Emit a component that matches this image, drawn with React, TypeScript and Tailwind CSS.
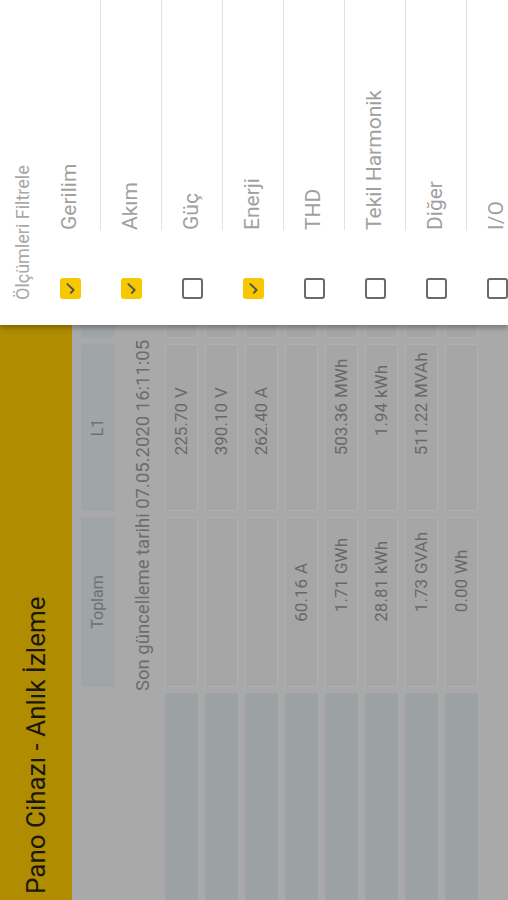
import { Fragment } from "react";

type Val = [string, string] | null;

const rows: { toplam: Val; l1: Val }[] = [
    { toplam: null, l1: ["225.70", "V"] },
    { toplam: null, l1: ["390.10", "V"] },
    { toplam: null, l1: ["262.40", "A"] },
    { toplam: ["60.16", "A"], l1: null },
    { toplam: ["1.71", "GWh"], l1: ["503.36", "MWh"] },
    { toplam: ["28.81", "kWh"], l1: ["1.94", "kWh"] },
    { toplam: ["1.73", "GVAh"], l1: ["511.22", "MVAh"] },
    { toplam: ["0.00", "Wh"], l1: null },
];

const filters = [
    { id: 1, label: "Gerilim", checked: true },
    { id: 2, label: "Akım", checked: true },
    { id: 3, label: "Güç", checked: false },
    { id: 4, label: "Enerji", checked: true },
    { id: 5, label: "THD", checked: false },
    { id: 6, label: "Tekil Harmonik", checked: false },
    { id: 7, label: "Diğer", checked: false },
    { id: 8, label: "I/O", checked: false },
];

function ValueCell({ value, width }: { value: Val; width: string }) {
    return (
        <div className={`${width} h-full rounded-[3px] bg-[#a6a6a6] border border-[#b0b0b0] flex items-center text-[17px] text-[#686868] whitespace-nowrap`}>
            {value && (
                <>
                    <span className="w-[107px] shrink-0 text-right">{value[0]}</span>
                    <span className="pl-[5px]">{value[1]}</span>
                </>
            )}
        </div>
    );
}

function Checkbox({ checked }: { checked: boolean }) {
    if (checked) {
        return (
            <div className="w-[21px] h-[21px] rounded-[3px] bg-[#f7c800] flex items-center justify-center">
                <svg width="15" height="15" viewBox="0 0 24 24" fill="none" stroke="#55554c" strokeWidth="3.2" strokeLinecap="round" strokeLinejoin="round">
                    <path d="M5 12.5l4.5 4.5L19 7" />
                </svg>
            </div>
        );
    }
    return <div className="w-[21px] h-[21px] rounded-[3px] border-2 border-[#6a6a6a] bg-white" />;
}

export default function App() {
    return (
        <div className="relative w-[508px] h-[900px] overflow-hidden bg-white" style={{ fontFamily: "Roboto, 'Noto Sans', sans-serif" }}>
            {/* the app is in landscape, the screenshot is turned a quarter turn */}
            <div className="absolute top-0 left-0 w-[900px] h-[508px] origin-top-left -rotate-90 translate-y-[900px] flex">
                {/* main screen, dimmed behind the drawer */}
                <div className="w-[575px] h-full flex flex-col bg-[#a9a9a9]">
                    <div className="h-[72px] shrink-0 bg-[#b08c00] flex items-center pl-[6px]">
                        <span className="text-[26px] text-[#1a180e] whitespace-nowrap">Pano Cihazı - Anlık İzleme</span>
                    </div>
                    <div className="flex-1 overflow-hidden pt-[9px]">
                        {/* header row */}
                        <div className="flex gap-[6px] h-[34px]">
                            <div className="w-[207px] shrink-0" />
                            <div className="w-[170px] shrink-0 rounded-[3px] bg-[#a0a5a8] flex items-center justify-center text-[16px] text-[#6e7173]">Toplam</div>
                            <div className="w-[167px] shrink-0 rounded-[3px] bg-[#a0a5a8] flex items-center justify-center text-[16px] text-[#6e7173]">L1</div>
                            <div className="w-[170px] shrink-0 rounded-[3px] bg-[#a0a5a8]" />
                        </div>
                        {/* last update */}
                        <div className="h-[50px] flex items-center pl-[209px] pt-[8px]">
                            <span className="text-[18.5px] text-[#6c6c6c] whitespace-nowrap">Son güncelleme tarihi 07.05.2020 16:11:05</span>
                        </div>
                        <div className="flex flex-col gap-[7px]">
                            {rows.map((row, i) => (
                                <Fragment key={i}>
                                    <div className="flex gap-[6px] h-[33px]">
                                        <div className="w-[207px] shrink-0 h-full rounded-[3px] bg-[#9ca1a3]" />
                                        <ValueCell value={row.toplam} width="w-[170px] shrink-0" />
                                        <ValueCell value={row.l1} width="w-[167px] shrink-0" />
                                        <ValueCell value={null} width="w-[170px] shrink-0" />
                                    </div>
                                </Fragment>
                            ))}
                        </div>
                    </div>
                </div>

                {/* filter drawer */}
                <div className="w-[325px] h-full bg-white shadow-[-3px_0_5px_rgba(0,0,0,0.28)] flex flex-col overflow-hidden">
                    <div className="h-[40px] shrink-0 flex items-center pl-[25px] pt-[4px]">
                        <span className="text-[18px] text-[#a8a8a8] whitespace-nowrap">Ölçümleri Filtrele</span>
                    </div>
                    {filters.map((f) => (
                        <div key={f.id} className="h-[61px] shrink-0 flex items-center">
                            <div className="w-[95px] pl-[26px] flex items-center">
                                <Checkbox checked={f.checked} />
                            </div>
                            <div className="flex-1 h-full flex items-center border-b border-[#e2e2e2]">
                                <span className="text-[21px] text-[#a0a0a0] whitespace-nowrap">{f.label}</span>
                            </div>
                        </div>
                    ))}
                </div>
            </div>
        </div>
    );
}
